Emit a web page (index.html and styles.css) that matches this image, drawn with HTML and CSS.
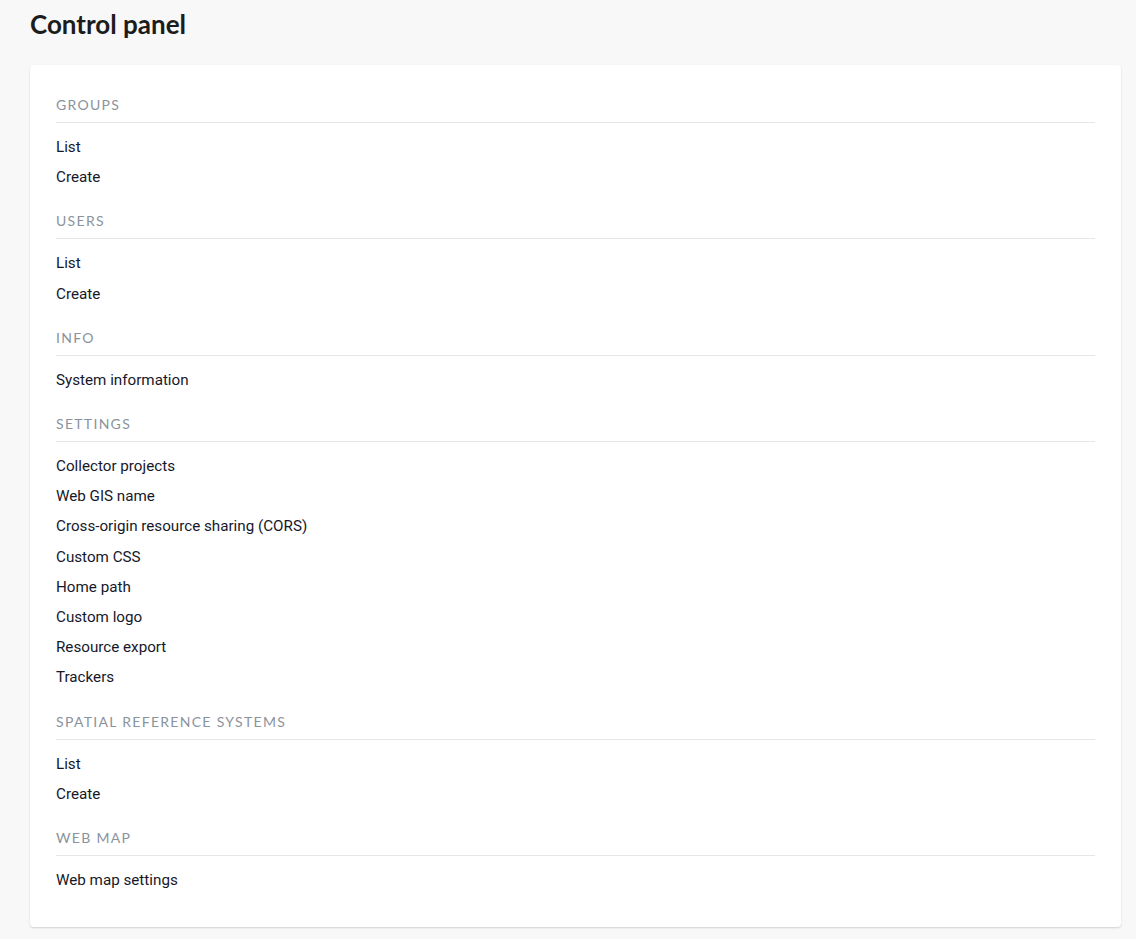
FILE: index.html
```html
<!DOCTYPE html>
<html>
<head>
<meta charset="utf-8">
<link rel="stylesheet" href="styles.css">
</head>
<body>
<div class="page">
  <h1 class="title">Control panel</h1>
  <div class="card">
    <section class="group">
      <h2 class="group-title">Groups</h2>
      <ul class="links">
        <li><a href="#">List</a></li>
        <li><a href="#">Create</a></li>
      </ul>
    </section>
    <section class="group">
      <h2 class="group-title">Users</h2>
      <ul class="links">
        <li><a href="#">List</a></li>
        <li><a href="#">Create</a></li>
      </ul>
    </section>
    <section class="group">
      <h2 class="group-title">Info</h2>
      <ul class="links">
        <li><a href="#">System information</a></li>
      </ul>
    </section>
    <section class="group">
      <h2 class="group-title">Settings</h2>
      <ul class="links">
        <li><a href="#">Collector projects</a></li>
        <li><a href="#">Web GIS name</a></li>
        <li><a href="#">Cross-origin resource sharing (CORS)</a></li>
        <li><a href="#">Custom CSS</a></li>
        <li><a href="#">Home path</a></li>
        <li><a href="#">Custom logo</a></li>
        <li><a href="#">Resource export</a></li>
        <li><a href="#">Trackers</a></li>
      </ul>
    </section>
    <section class="group">
      <h2 class="group-title">Spatial reference systems</h2>
      <ul class="links">
        <li><a href="#">List</a></li>
        <li><a href="#">Create</a></li>
      </ul>
    </section>
    <section class="group">
      <h2 class="group-title">Web map</h2>
      <ul class="links">
        <li><a href="#">Web map settings</a></li>
      </ul>
    </section>
  </div>
</div>
</body>
</html>
```

FILE: styles.css
```css
html, body {
  margin: 0;
  padding: 0;
  background: #f8f8f8;
}
.page {
  padding: 8px 15px 12px 30px;
}
.title {
  margin: 0 0 25px 0;
  font-family: Lato, "Liberation Sans", sans-serif;
  font-weight: 700;
  font-size: 26px;
  line-height: 32px;
  color: #1c1c1c;
}
.card {
  background: #ffffff;
  border-radius: 4px;
  box-shadow: 0 1px 2px rgba(0, 0, 0, 0.16);
  padding: 30px 26px 32px 26px;
}
.group + .group {
  margin-top: 19px;
}
.group-title {
  margin: 0;
  padding-bottom: 7px;
  border-bottom: 1px solid #e6e6e6;
  font-family: Lato, "Liberation Sans", sans-serif;
  font-weight: 400;
  font-size: 14px;
  line-height: 20px;
  letter-spacing: 1.3px;
  text-transform: uppercase;
  color: #8a939c;
}
.links {
  list-style: none;
  margin: 9px 0 0 0;
  padding: 0;
}
.links li {
  line-height: 30.2px;
  font-family: Roboto, "Liberation Sans", sans-serif;
  font-size: 15.2px;
}
.links a {
  color: #16182a;
  text-decoration: none;
}
```
